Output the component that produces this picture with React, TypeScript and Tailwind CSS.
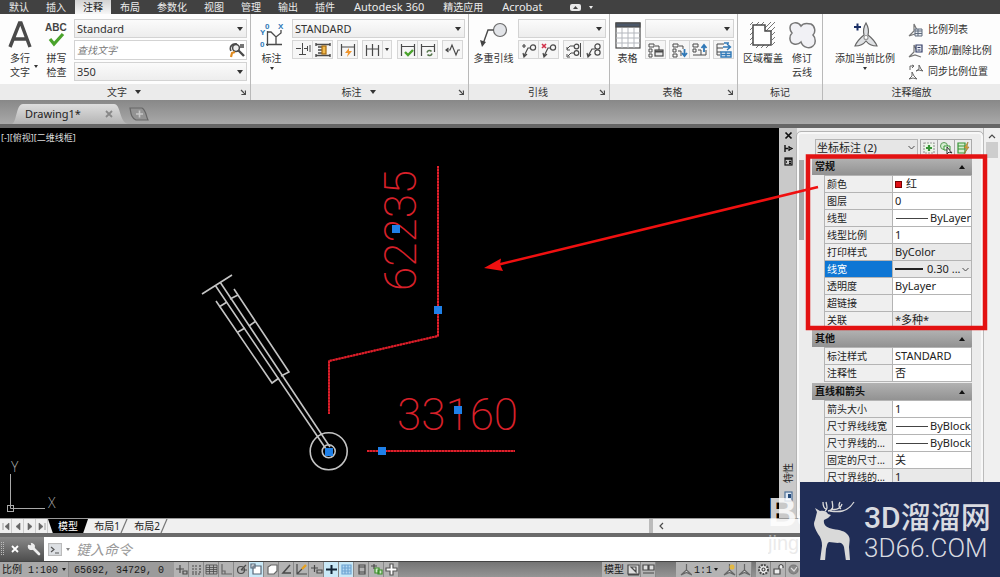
import React from "react";

interface IconProps {
  children: React.ReactNode;
  w?: number;
  h?: number;
  className?: string;
}

const Icon: React.FC<IconProps> = ({ children, w = 16, h = 16, className = "" }) => (
  <svg
    width={w}
    height={h}
    viewBox={`0 0 ${w} ${h}`}
    fill="none"
    stroke="#4a4a4a"
    strokeWidth="1.2"
    className={`shrink-0 ${className}`}
    aria-hidden="true"
  >
    {children}
  </svg>
);

const Caret: React.FC<{ className?: string }> = ({ className = "" }) => (
  <svg width="6" height="4" viewBox="0 0 6 4" className={`shrink-0 ${className}`} aria-hidden="true">
    <path d="M0 0h6L3 4z" fill="currentColor" />
  </svg>
);

const TinyCaret: React.FC<{ className?: string }> = ({ className = "" }) => (
  <svg width="4" height="3" viewBox="0 0 4 3" className={`shrink-0 ${className}`} aria-hidden="true">
    <path d="M0 0h4L2 3z" fill="currentColor" />
  </svg>
);

const menuTabs = ["默认", "插入", "注释", "布局", "参数化", "视图", "管理", "输出", "插件", "Autodesk 360", "精选应用", "Acrobat"];

const MenuBar: React.FC = () => (
  <nav className="flex h-[14px] shrink-0 items-stretch gap-px bg-[#414141] pl-px text-[10px] leading-[14px] text-[#ececec]">
    {menuTabs.map((tab) => (
      <button
        key={tab}
        className={
          tab === "注释"
            ? "bg-gradient-to-b from-[#d2d2d2] to-[#f6f6f6] px-2 text-[#222]"
            : /^A/.test(tab)
              ? "px-[10px] text-[11px]"
              : "px-2"
        }
      >
        {tab}
      </button>
    ))}
    <button className="ml-4 flex items-center gap-2" aria-label="最小化功能区">
      <Icon w={11} h={7}>
        <rect width="11" height="7" rx="2" fill="#e8e8e8" stroke="none" />
        <path d="M3 5h5L5.500 2z" fill="#444" stroke="none" />
      </Icon>
      <TinyCaret />
    </button>
  </nav>
);

interface PanelProps {
  title: string;
  width: string;
  caret?: boolean;
  launcher?: boolean;
  children: React.ReactNode;
}

const Panel: React.FC<PanelProps> = ({ title, width, caret, launcher, children }) => (
  <section className={`flex flex-col border-r border-[#b9b9b9] bg-[#fdfdfd] ${width}`}>
    <div className="flex flex-1 items-start pt-[5px]">{children}</div>
    <div className="flex h-4 items-center bg-[#ebebeb] pr-1">
      <span className="w-2" />
      <button className="flex flex-1 items-center justify-center gap-2 text-[10px] leading-4">
        {title}
        {caret && <Caret />}
      </button>
      {launcher ? (
        <button aria-label={`${title}设置`}>
          <Icon w={6} h={6}>
            <path d="M1 1l4 4M5.400 1.500v4h-4" />
          </Icon>
        </button>
      ) : (
        <span className="w-1" />
      )}
    </div>
  </section>
);

interface BigButtonProps {
  lines: string[];
  arrow?: boolean;
  className?: string;
  children: React.ReactNode;
}

const BigButton: React.FC<BigButtonProps> = ({ lines, arrow, className = "", children }) => (
  <button className={`flex shrink-0 flex-col items-center text-[10px] leading-[14px] ${className}`}>
    <span className="flex h-8 items-center">{children}</span>
    {lines.map((line) => (
      <span key={line}>{line}</span>
    ))}
    {arrow && <TinyCaret className="mt-[2px]" />}
  </button>
);

const Combo: React.FC<{ label: string; value: string }> = ({ label, value }) => (
  <div className="relative h-[19px] w-full">
    <select
      aria-label={label}
      className="block h-full w-full appearance-none border border-[#d3d3d3] bg-gradient-to-b from-[#fbfbfb] to-[#ededed] pl-[2px] text-[11px] leading-[17px] outline-none"
    >
      <option>{value}</option>
    </select>
    <Caret className="pointer-events-none absolute right-1 top-2" />
  </div>
);

const Tool: React.FC<{ label: string; children: React.ReactNode }> = ({ label, children }) => (
  <button aria-label={label} className="-mr-px flex h-[19px] w-[21px] items-center justify-center border border-[#d6d6d6] bg-[#f6f6f6]">
    {children}
  </button>
);

const Ribbon: React.FC = () => (
  <div className="flex h-[86px] shrink-0 text-[#333]">
    <Panel title="文字" width="w-[251px]" caret launcher>
      <BigButton lines={["多行", "文字"]} className="w-10">
        <Icon w={24} h={28}>
          <path d="M2 26L11.500 2h1.500L22 26M6 18h12" strokeWidth="3.400" />
        </Icon>
      </BigButton>
      <TinyCaret className="-ml-[6px] mt-[46px]" />
      <BigButton lines={["拼写", "检查"]} className="ml-px w-[35px]">
        <Icon w={26} h={26}>
          <text x="1" y="9" fontSize="10" fontWeight="700" fontFamily="Liberation Sans" fill="#444" stroke="none">
            ABC
          </text>
          <path d="M6 17l4 5 9-10" stroke="#4aa32c" strokeWidth="3.200" />
        </Icon>
      </BigButton>
      <div className="mr-[3px] flex flex-1 flex-col gap-[2px]">
        <Combo label="文字样式" value="Standard" />
        <div className="flex h-[20px] items-center border border-[#d3d3d3] bg-white">
          <input
            aria-label="查找文字"
            placeholder="查找文字"
            className="w-0 flex-1 bg-transparent pl-[2px] text-[10px] italic outline-none placeholder:text-[#777]"
          />
          <button aria-label="查找" className="mr-px">
            <Icon>
              <path d="M2 9C0 5 3 1 8 2" strokeWidth="1.600" />
              <circle cx="7" cy="6" r="3.400" fill="#eee" strokeWidth="1.500" />
              <path d="M9 8l6 6" strokeWidth="2.400" />
              <path d="M11 3h4M11 5h4" strokeWidth="1.500" />
              <path d="M2 15l1-4 3-1" stroke="#e08a1e" strokeWidth="2.200" />
            </Icon>
          </button>
        </div>
        <Combo label="文字高度" value="350" />
      </div>
    </Panel>

    <Panel title="标注" width="w-[218px]" caret launcher>
      <BigButton lines={["标注"]} arrow className="w-[41px]">
        <Icon w={26} h={28}>
          <text x="6" y="8" fontSize="8" fontWeight="700" fontFamily="Liberation Sans" fill="#2f78b7" stroke="none">0</text>
          <text x="19" y="8" fontSize="8" fontWeight="700" fontFamily="Liberation Sans" fill="#2f78b7" stroke="none">X</text>
          <text x="1" y="14" fontSize="8" fontWeight="700" fontFamily="Liberation Sans" fill="#2f78b7" stroke="none">Y</text>
          <text x="1" y="26" fontSize="8" fontWeight="700" fontFamily="Liberation Sans" fill="#2f78b7" stroke="none">0</text>
          <path d="M8.500 10v15M8 11h4l5 5 5-4V9M17 15v9M7 23.500h16" strokeWidth="1.300" />
        </Icon>
      </BigButton>
      <div className="mr-[3px] flex flex-1 flex-col gap-[2px]">
        <Combo label="标注样式" value="STANDARD" />
        <div className="flex gap-[5px]">
          <div className="flex">
            <Tool label="打断">
              <Icon>
                <path d="M1 6.500h5M9 6.500h3M7.500 1v11M4 12.500h7M12.500 4v5M15 3v7" strokeWidth="1" />
              </Icon>
            </Tool>
            <Tool label="调整间距">
              <Icon>
                <path d="M1 1v3M15 1v3M1 12v3M15 12v3M1 2.500h14M1 13.500h14M3 5h5M3 8h5M3 11h5" strokeWidth="1.400" />
                <rect x="7" y="4" width="4" height="8" fill="#f0b94d" stroke="#a56a10" />
              </Icon>
            </Tool>
          </div>
          <Tool label="快速标注">
            <Icon>
              <path d="M1.500 2v12M14.500 2v12M2 5h12" />
              <path d="M9 6l-4 5h3l-1 4 5-6H9z" fill="#f0962e" stroke="none" />
            </Icon>
          </Tool>
          <div className="flex">
            <Tool label="连续标注">
              <Icon>
                <path d="M1.500 3v11M7.500 2v12M13.500 3v11M2 7h12" />
              </Icon>
            </Tool>
            <button aria-label="更多标注" className="flex w-[10px] items-center justify-center border border-[#d6d6d6] bg-[#f6f6f6]">
              <TinyCaret />
            </button>
          </div>
          <div className="flex">
            <Tool label="检验">
              <Icon>
                <path d="M1.500 2v12M14.500 2v12M2 4.500h12" />
                <path d="M5 10l3 3 5-5" stroke="#4aa32c" strokeWidth="2.400" />
              </Icon>
            </Tool>
            <Tool label="更新">
              <Icon>
                <path d="M1.500 2v12M14.500 2v8M2 4.500h12" />
                <path d="M7 10.500a2.500 2.500 0 0 1 4.500-1M12 11.500a2.500 2.500 0 0 1-4.500 1" stroke="#56764c" strokeWidth="1.500" />
              </Icon>
            </Tool>
          </div>
          <Tool label="折弯线性">
            <Icon>
              <path d="M1 8h4l2-5 4 10 2-5h2M3.500 6L1 8l2.500 2" />
            </Icon>
          </Tool>
        </div>
      </div>
    </Panel>

    <Panel title="引线" width="w-[141px]" launcher>
      <BigButton lines={["多重引线"]} className="w-[49px]">
        <Icon w={28} h={28}>
          <circle cx="20" cy="9" r="6.500" fill="#e2e4e8" stroke="#6b6b6b" />
          <path d="M13.500 9H8L3 23" strokeWidth="1.400" />
          <path d="M0 19l2 7 4-5z" fill="#444" stroke="none" />
        </Icon>
      </BigButton>
      <div className="mr-[3px] flex flex-1 flex-col gap-[2px]">
        <Combo label="引线样式" value="" />
        <div className="flex gap-[5px]">
          <div className="flex">
            <Tool label="添加引线">
              <Icon>
                <circle cx="12" cy="5.500" r="2.600" />
                <path d="M9.500 6H7l-4 8M2 11l1 4 3-3M1 4h4M3 2v4" />
              </Icon>
            </Tool>
            <Tool label="删除引线">
              <Icon>
                <circle cx="12" cy="5.500" r="2.600" />
                <path d="M9.500 6H7l-4 8M2 11l1 4 3-3" />
                <path d="M1 2l4 4M5 2L1 6" stroke="#d2324a" strokeWidth="1.600" />
              </Icon>
            </Tool>
          </div>
          <div className="flex">
            <Tool label="对齐">
              <Icon>
                <circle cx="10.500" cy="4.500" r="2.300" />
                <circle cx="10.500" cy="11" r="2.300" />
                <path d="M14.500 1v14M8 4H4L1 7M8 11H5l-3 3M1 5v3h3M1 12v3h3" strokeWidth="1" />
              </Icon>
            </Tool>
            <Tool label="合并">
              <Icon>
                <circle cx="11.500" cy="4.500" r="2.600" />
                <circle cx="11.500" cy="10.500" r="2.600" />
                <path d="M9 7H6l-4 7M1 11l1 4 3-3" />
              </Icon>
            </Tool>
          </div>
        </div>
      </div>
    </Panel>

    <Panel title="表格" width="w-[128px]" launcher>
      <BigButton lines={["表格"]} className="w-[35px]">
        <Icon w={26} h={27}>
          <rect x="1" y="1" width="24" height="25" fill="#fff" />
          <rect x="1" y="1" width="24" height="4" fill="#4b5768" />
          <path d="M7 6v20M13 6v20M19 6v20M1 11h24M1 16h24M1 21h24" stroke="#b4b7bd" strokeWidth="1" />
        </Icon>
      </BigButton>
      <div className="mr-[3px] flex flex-1 flex-col gap-[2px]">
        <Combo label="表格样式" value="" />
        <div className="flex gap-[4px]">
          <Tool label="数据链接">
            <Icon>
              <path d="M1 2h5v3H1zM1 7h3v3H1zM1 12h3v3H1zM7 4h4v4" strokeWidth="1" />
              <rect x="7" y="8" width="8" height="6" fill="#e6e6e6" />
              <path d="M7 9.500h8" strokeWidth="2" />
            </Icon>
          </Tool>
          <div className="flex">
            <Tool label="从源下载">
              <Icon>
                <path d="M1 2h5v3H1zM1 7h3v3H1zM1 12h4v3H1zM7 4h4v3M6 9h3v5" strokeWidth="1" />
                <path d="M12.500 7v6M10 11l2.500 3L15 11" stroke="#2f78b7" strokeWidth="1.800" />
              </Icon>
            </Tool>
            <Tool label="上载到源">
              <Icon>
                <path d="M1 2h5v3H1zM1 7h3v3H1zM1 13h13V8M6 8h3v5" strokeWidth="1" />
                <path d="M12 10V3M9.500 6L12 3l2.500 3" stroke="#2f78b7" strokeWidth="1.800" />
              </Icon>
            </Tool>
          </div>
          <Tool label="提取数据">
            <Icon>
              <path d="M1 2h7M1 2v11h3M1 6h6M1 10h4" strokeWidth="1" />
              <path d="M7 5h7M11 2l3.500 3L11 8M5 10h10v5H5zM10 10v5M5 12.500h10M8 1h5" stroke="#2f78b7" strokeWidth="1.400" />
            </Icon>
          </Tool>
        </div>
      </div>
    </Panel>

    <Panel title="标记" width="w-[85px]">
      <BigButton lines={["区域覆盖"]} className="ml-[3px] w-[44px]">
        <Icon w={28} h={28}>
          <path
            d="M1 4l3-3M1 9l3-3M1 14l3-3M1 19l3-3M1 24l3-3M7 4l3-3M12 4l3-3M16 7l6-6M17 10l9-9M22 10l4-4M23 14l3-3M23 19l3-3M23 24l3-3M7 27l3-3M12 27l3-3M17 27l3-3"
            stroke="#777"
            strokeWidth="1"
          />
          <path d="M4 4h12v6h6v14H4z" fill="#fff" strokeWidth="1.500" />
        </Icon>
      </BigButton>
      <BigButton lines={["修订", "云线"]} className="w-[34px]">
        <Icon w={28} h={28}>
          <path
            d="M13 5C10 0 2 1 2 7c0 3 1 4 2 5-3 3-3 10 2 11 4 1 6-1 7-2 2 6 9 7 12 4 3-2 3-8 0-11 3-3 2-9-2-11-4-1-8-1-10 2z"
            fill="#f1f1f5"
            stroke="#777"
            strokeWidth="1.500"
          />
        </Icon>
      </BigButton>
    </Panel>

    <Panel title="注释缩放" width="min-w-[177px] flex-1 border-r-0">
      <BigButton lines={["添加当前比例"]} arrow className="w-[84px]">
        <Icon w={26} h={28}>
          <path d="M2 6h7M5.500 2.500v7" stroke="#1b2f66" strokeWidth="2" />
          <path d="M14 2c-3 5-3 8-2 12-5 4-7 6-9 11 5 0 8-1 11-5 3 4 6 5 11 5-2-5-4-7-9-11 1-4 1-7-2-12z" fill="#dfe1e4" stroke="#666" />
          <circle cx="14" cy="16.500" r="2" fill="#fff" stroke="#999" />
        </Icon>
      </BigButton>
      <div className="ml-px flex flex-col text-[10px] leading-[21px]">
        <button className="flex items-center gap-1 whitespace-nowrap">
          <Icon>
            <path d="M1 14l5-5V2l3 6M1 14l6-2" stroke="#777" />
            <path d="M7 7h7v7H7zM7 9h7M7 11.500h7M10 7v7" stroke="#5f6b7c" fill="#e9edf2" strokeWidth="1" />
          </Icon>
          比例列表
        </button>
        <button className="flex items-center gap-1 whitespace-nowrap">
          <Icon>
            <path d="M1 14l5-5V2l3 6M1 14l6-2 6 2" stroke="#777" />
            <path d="M8 2h6v7H8z" stroke="#333c66" fill="#e9edf2" />
            <path d="M9.500 4.500h3M9.500 7h3" stroke="#333c66" strokeWidth="1" />
          </Icon>
          添加/删除比例
        </button>
        <button className="flex items-center gap-1 whitespace-nowrap">
          <Icon>
            <path d="M2 6V2h4M4 1l2 1-2 2M1 15l3-3V8l2 4 3 3-4-1zM8 7l3-2V1l2 4 2 2-4-1z" stroke="#666" strokeWidth="1" />
          </Icon>
          同步比例位置
        </button>
      </div>
    </Panel>
  </div>
);

const FileTabs: React.FC = () => (
  <div className="flex h-7 shrink-0 items-end border-b-4 border-[#666] bg-gradient-to-b from-[#888] to-[#a9a9a9] pl-3">
    <button className="relative flex h-5 w-[116px] items-center pl-[13px] text-[11px] text-[#222]">
      <svg width="116" height="20" viewBox="0 0 116 20" className="absolute inset-0" aria-hidden="true">
        <defs>
          <linearGradient id="fileTab" x1="0" y1="0" x2="0" y2="1">
            <stop offset="0" stopColor="#dedede" />
            <stop offset="1" stopColor="#b4b4b4" />
          </linearGradient>
        </defs>
        <path d="M0 20C5 18 4 0 11 0h91c7 0 5 18 14 20z" fill="url(#fileTab)" />
      </svg>
      <span className="relative">Drawing1*</span>
      <Icon w={8} h={8} className="relative ml-auto mr-[15px]">
        <path d="M1 1l6 6M7 1L1 7" stroke="#888" strokeWidth="1.800" />
      </Icon>
    </button>
    <button aria-label="新图形" className="mb-[3px] ml-px">
      <Icon w={20} h={14}>
        <path d="M1 1h12c4 2 4 8 6 12H7C2 11 2 6 1 1z" fill="#939393" stroke="#666" />
        <path d="M7 7h7M10.500 3.500v7" stroke="#c8c8c8" strokeWidth="1.600" />
      </Icon>
    </button>
  </div>
);

const grips = [
  [396, 229],
  [438, 310],
  [458, 410],
  [382, 451],
];

const Drawing: React.FC = () => (
  <div className="relative min-w-0 flex-1 overflow-hidden bg-black">
    <div className="absolute left-px top-1 text-[9px] leading-[11px] text-[#ddd]">[-][俯视][二维线框]</div>
    <svg width="780" height="391" viewBox="0 128 780 391" fill="none" className="block" aria-label="图形">
      <g stroke="#c4c4c4" strokeWidth="1.600">
        <path d="M202 294l30-19M215 285l111 164M220 282l110 165" />
        <path d="M216 301l56 82 7-5M219 307l8-5M238 332l7-4" />
        <path d="M234 289l55 83-8 4M230 299l8-4M249 326l7-5" />
        <circle cx="328.700" cy="451.300" r="18.500" />
        <circle cx="328.700" cy="451.300" r="6.500" />
      </g>
      <rect x="325" y="448" width="8" height="8" fill="#1f80e8" />
      <g stroke="#9c1219" strokeWidth="2">
        <path d="M438 166v170l-109 25v53M367 451h148" />
        <path d="M438 166v170l-109 25v53M367 451h148" stroke="#e0202c" strokeDasharray="2 1" />
      </g>
      <g fill="#d8202a" fontFamily="Roboto" fontWeight="200" fontSize="44">
        <text x="397" y="430">33160</text>
        <text transform="translate(416 291) rotate(-90)">62235</text>
      </g>
      {grips.map(([x, y]) => (
        <rect key={`${x}-${y}`} x={x - 4} y={y - 4} width="8" height="8" fill="#1f80e8" />
      ))}
      <g stroke="#a9a9a9" strokeWidth="1">
        <path d="M10.500 474v34.500H45" />
        <rect x="7.500" y="505.500" width="6" height="6" />
      </g>
      <g fill="#a9a9a9" fontFamily="Open Sans" fontWeight="300" fontSize="14">
        <text x="11" y="472">Y</text>
        <text x="48" y="508">X</text>
      </g>
    </svg>
  </div>
);

type Kind = "text" | "red" | "line" | "select" | "gray";

interface Property {
  name: string;
  value: string;
  kind?: Kind;
}

const groups: { title: string; rows: Property[] }[] = [
  {
    title: "常规",
    rows: [
      { name: "颜色", value: "红", kind: "red" },
      { name: "图层", value: "0" },
      { name: "线型", value: "ByLayer", kind: "line" },
      { name: "线型比例", value: "1" },
      { name: "打印样式", value: "ByColor", kind: "gray" },
      { name: "线宽", value: "0.30 ...", kind: "select" },
      { name: "透明度", value: "ByLayer" },
      { name: "超链接", value: "" },
      { name: "关联", value: "*多种*", kind: "gray" },
    ],
  },
  {
    title: "其他",
    rows: [
      { name: "标注样式", value: "STANDARD" },
      { name: "注释性", value: "否" },
    ],
  },
  {
    title: "直线和箭头",
    rows: [
      { name: "箭头大小", value: "1" },
      { name: "尺寸界线线宽", value: "ByBlock", kind: "line" },
      { name: "尺寸界线的...", value: "ByBlock", kind: "line" },
      { name: "固定的尺寸...", value: "关" },
      { name: "尺寸界线的...", value: "1", kind: "gray" },
    ],
  },
];

const PropertyValue: React.FC<{ row: Property }> = ({ row }) => {
  if (row.kind === "red") {
    return (
      <span className="flex items-center gap-1 pl-[2px]">
        <span className="h-[7px] w-[7px] border border-[#700] bg-[#e00f16]" />
        {row.value}
      </span>
    );
  }
  if (row.kind === "line") {
    return (
      <span className="flex items-center gap-[2px] pl-[3px]">
        <span className="h-px w-8 shrink-0 bg-[#444]" />
        {row.value}
      </span>
    );
  }
  if (row.kind === "select") {
    return (
      <span className="relative flex items-center gap-1 pl-[2px]">
        <span className="h-[2px] w-7 shrink-0 bg-[#222]" />
        <select aria-label={row.name} className="block h-4 w-0 flex-1 appearance-none bg-transparent leading-4 outline-none">
          <option>{row.value}</option>
        </select>
        <Icon w={7} h={5} className="pointer-events-none absolute right-[2px]">
          <path d="M.5 1l3 3 3-3" strokeWidth="1" />
        </Icon>
      </span>
    );
  }
  return <span className="pl-[2px]">{row.value}</span>;
};

const PropertyGroup: React.FC<{ title: string; rows: Property[] }> = ({ title, rows }) => (
  <div>
    <button className="flex h-[17px] w-full items-center justify-between bg-gradient-to-b from-[#b2b2b2] to-[#929292] pl-[3px] pr-[7px] text-[10px] font-bold leading-[17px] text-[#111]">
      {title}
      <svg width="6" height="4" viewBox="0 0 6 4" aria-hidden="true">
        <path d="M0 4h6L3 0z" fill="#111" />
      </svg>
    </button>
    <div className="pl-3">
      <table className="w-full table-fixed border-collapse text-[#222]">
        <tbody>
          {rows.map((row, index) => (
            <tr key={index} className="h-[17px]">
              <th
                scope="row"
                className={`w-[68px] overflow-hidden whitespace-nowrap border border-[#b4b4b4] p-0 pl-[2px] text-left text-[10px] font-normal leading-4 ${
                  row.kind === "select" ? "bg-[#0e76d4] text-white" : "bg-[#efefef]"
                }`}
              >
                {row.name}
              </th>
              <td
                className={`overflow-hidden whitespace-nowrap border border-[#b4b4b4] p-0 text-[11px] leading-4 ${
                  row.kind === "gray" || row.kind === "select" ? "bg-[#e9e9e9]" : "bg-white"
                }`}
              >
                <PropertyValue row={row} />
              </td>
            </tr>
          ))}
        </tbody>
      </table>
    </div>
  </div>
);

const Palette: React.FC = () => (
  <aside className="flex w-[221px] shrink-0 bg-[#ececec]">
    <div className="flex w-[18px] shrink-0 flex-col items-center gap-1 bg-[#c9c9c9] pb-4 pt-[3px]">
      <button aria-label="关闭">
        <Icon w={9} h={9}>
          <path d="M1.500 1.500l6 6M7.500 1.500l-6 6" stroke="#111" strokeWidth="1.700" />
        </Icon>
      </button>
      <button aria-label="自动隐藏">
        <Icon w={9} h={9}>
          <path d="M1 1v7M1 4.500h3" stroke="#111" strokeWidth="1.400" />
          <path d="M5 2v5M5 3l3 1.500L5 6" stroke="#111" />
        </Icon>
      </button>
      <button aria-label="特性菜单">
        <Icon w={9} h={9}>
          <rect x="1" y="1" width="7" height="7" stroke="#111" />
          <path d="M1 2h7M2 5h1M5 4.500h2M5 6.500h2" stroke="#111" strokeWidth="1.500" />
        </Icon>
      </button>
      <span className="mt-auto text-[10px] leading-3 text-[#222] [writing-mode:sideways-lr]">特性</span>
      <Icon w={9} h={11} className="mt-1">
        <rect x="1" y="1" width="7" height="9" stroke="#4d6f96" fill="#dfe9f5" />
        <rect x="4" y="3" width="3" height="4" fill="#234a7a" stroke="none" />
      </Icon>
    </div>
    <div className="mt-1 flex min-w-0 flex-1 overflow-hidden rounded-t border-2 border-b-0 border-[#f8f8f8] outline outline-[#b4b4b4]">
      <div className="w-[5px] shrink-0 pt-[26px]">
        <div className="h-20 bg-[#a9a9a9]" />
      </div>
      <div className="ml-2 mr-[9px] mt-[5px] flex min-w-0 flex-1 flex-col gap-px">
        <div className="mb-px flex h-[17px] shrink-0 items-stretch pl-[3px]">
          <div className="relative flex-1">
            <select
              aria-label="选定对象"
              className="block h-full w-full appearance-none border border-[#b5b5b5] bg-[#e6e6e6] pl-px text-[11px] leading-[15px] text-[#222] outline-none"
            >
              <option>坐标标注 (2)</option>
            </select>
            <Icon w={7} h={5} className="pointer-events-none absolute right-[3px] top-[6px]">
              <path d="M.5 1l3 3 3-3" strokeWidth="1" />
            </Icon>
          </div>
          <button aria-label="切换 PICKADD" className="ml-[2px] border border-[#aaa] px-px">
            <Icon w={14} h={14}>
              <path d="M2 2h10v10H2z" stroke="#999" strokeDasharray="2 1" fill="#eaf5e6" />
              <path d="M4 7h6M7 4v6" stroke="#379437" strokeWidth="2.200" />
            </Icon>
          </button>
          <button aria-label="选择对象" className="border border-l-0 border-[#aaa] px-px">
            <Icon w={14} h={14}>
              <circle cx="5" cy="5" r="3.500" stroke="#5a9a58" fill="#d6efd1" strokeWidth="1" />
              <path d="M5 5h6v4H5z" stroke="#379437" strokeWidth="1" fill="#eef8ec" />
              <path d="M8 6v7l2-2 3 1z" fill="#fff" stroke="#333" strokeWidth="1" />
            </Icon>
          </button>
          <button aria-label="快速选择" className="border border-l-0 border-[#aaa] px-px">
            <Icon w={14} h={14}>
              <path d="M2 2h7v10H2zM2 5h7M2 8h7" stroke="#379437" fill="#d6efd1" />
              <path d="M12 1L8 7h3l-3 6 5-7h-2z" fill="#e6a935" stroke="#8d7434" strokeWidth=".6" />
            </Icon>
          </button>
        </div>
        {groups.map((group) => (
          <PropertyGroup key={group.title} title={group.title} rows={group.rows} />
        ))}
      </div>
    </div>
    <div className="flex w-[17px] shrink-0 flex-col items-center border-l border-[#bbb] bg-[#f0f0f0] pt-[5px]">
      <Icon w={8} h={6}>
        <path d="M1 5l3-3 3 3" />
      </Icon>
      <div className="mt-[3px] h-4 w-3 bg-[#cdcdcd]" />
    </div>
  </aside>
);

const LayoutTabs: React.FC = () => (
  <div className="flex h-[15px] shrink-0 items-stretch border-t border-[#999] bg-[#f0f0f0] text-[10px] leading-[14px] text-[#222]">
    {["M3 2v7M9 2L5 5.500 9 9z", "M8 2L4 5.500 8 9z", "M4 2l4 3.500L4 9z", "M9 2v7M3 2l4 3.500L3 9z"].map((d) => (
      <button key={d} aria-label="布局导航" className="flex w-3 items-center justify-center border-r border-[#ccc]">
        <Icon w={11} h={11}>
          <path d={d} fill="#666" stroke="#666" strokeWidth=".6" />
        </Icon>
      </button>
    ))}
    <button className="w-10 bg-black text-white [clip-path:polygon(0_0,100%_0,88%_100%,12%_100%)]">模型</button>
    {["布局1", "布局2"].map((name) => (
      <button key={name} className="flex w-10 items-center justify-end">
        {name}
        <Icon w={8} h={14}>
          <path d="M7 0L1 14" stroke="#777" />
        </Icon>
      </button>
    ))}
    <div className="ml-auto flex w-[351px] items-center border-l-4 border-[#bbb] pl-[5px]">
      <button aria-label="向左滚动">
        <Icon w={7} h={8}>
          <path d="M5 1L2 4l3 3" />
        </Icon>
      </button>
    </div>
  </div>
);

const CommandLine: React.FC = () => (
  <div className="flex h-7 shrink-0 items-stretch border-t-4 border-[#6a6a6a] bg-white">
    <div className="flex w-11 items-center gap-2 bg-gradient-to-b from-[#8a8a8a] to-[#4e4e4e]">
      <Icon w={4} h={16}>
        <path d="M1.500 1v14M3.500 1v14" stroke="#bbb" strokeDasharray="1 1" strokeWidth="1" />
      </Icon>
      <button aria-label="关闭命令行" className="-ml-px">
        <Icon w={8} h={8}>
          <path d="M1 1l6 6M7 1L1 7" stroke="#fff" strokeWidth="1.800" />
        </Icon>
      </button>
      <button aria-label="自定义">
        <Icon w={14} h={14}>
          <path d="M6 6l6 6" stroke="#eee" strokeWidth="2.600" strokeLinecap="round" />
          <path d="M1.500 3.500a3 3 0 1 0 3-2L5 4z" fill="#eee" stroke="#eee" />
        </Icon>
      </button>
    </div>
    <button aria-label="最近使用的命令" className="ml-1 flex items-center gap-1 text-[#888]">
      <Icon w={14} h={13}>
        <rect x=".5" y=".5" width="13" height="12" fill="#dde0e4" stroke="#bbb" />
        <path d="M3 4l3 2.500L3 9M7 10h4" stroke="#555" />
      </Icon>
      <TinyCaret />
    </button>
    <input
      aria-label="命令"
      placeholder="键入命令"
      className="ml-[6px] w-0 flex-1 text-[14px] italic outline-none placeholder:text-[#999]"
    />
    {/* keeps the prompt clear of the logo */}
    <span className="w-[240px]" />
  </div>
);

const statusIcons: { label: string; on?: boolean; art: React.ReactNode }[] = [
  { label: "推断约束", art: <path d="M1 6h8M5 2v8M8 8h4v3H8z" /> },
  { label: "捕捉模式", art: <path d="M2 3h5M2 6h5M2 9h5M10 2v8M2 11h9" strokeDasharray="2 1" /> },
  { label: "栅格显示", art: <path d="M1 2h11v9H1zM1 4.500h11M1 6.500h11M1 8.500h11M4.500 2v9M8.500 2v9" strokeWidth=".8" /> },
  { label: "正交模式", art: <path d="M2 1v10h10M5 11V8H2" stroke="#666" /> },
  { label: "极轴追踪", art: <><circle cx="6" cy="7" r="3.500" /><path d="M6 7h6M6 7l5-5" /></> },
  { label: "对象捕捉", on: true, art: <path d="M3 3h8v8H3zM1 1h4v4H1z" fill="#fff" stroke="#567" /> },
  { label: "三维对象捕捉", art: <path d="M3 4l3-2h6v6l-3 3H3z" fill="#fff" stroke="#666" /> },
  { label: "对象捕捉追踪", art: <path d="M10 2L3 10h8" strokeWidth="1.500" /> },
  { label: "动态 UCS", art: <><path d="M2 1v10h10M2 11l5-5" /><path d="M7 6l4-4" stroke="#e6a01e" strokeWidth="2.400" /></> },
  { label: "动态输入", art: <path d="M1 5h7M4.500 2v7M7 7h5v3H7z" /> },
  { label: "线宽", on: true, art: <path d="M1 6.500h11M6.500 2v9" stroke="#123" strokeWidth="2" /> },
  { label: "透明度", on: true, art: <path d="M2 2h9v9H2zM2 5h9M2 8h9M5 2v9M8 2v9" stroke="#6da4d2" fill="#b5d9f2" /> },
  { label: "快捷特性", art: <path d="M4 2h6v9H4zM4 4h6M4 9h6" /> },
  { label: "选择循环", art: <><path d="M1 3h6M4 1v5" /><path d="M5 5h4v5H5zM8 7h4v4H8z" stroke="#3c8f2b" fill="#cfeac8" /></> },
  { label: "注释监视器", art: <path d="M5 1h3v4h4v3H8v4H5V8H1V5h4z" fill="#fff" stroke="#555" /> },
];

const StatusButton: React.FC<{ label: string; on?: boolean; children: React.ReactNode }> = ({ label, on, children }) => (
  <button
    aria-label={label}
    className={`flex w-[15px] shrink-0 items-center justify-center border-r border-[#888] ${on ? "bg-[#c9e8f6]" : "bg-[#b3b3b3]"}`}
  >
    <Icon w={13} h={13}>{children}</Icon>
  </button>
);

const scaleArt = <path d="M6.500 1v6L1 12l5.500-2.500L12 12 6.500 7" fill="#eee" stroke="#666" />;

const StatusBar: React.FC = () => (
  <footer className="flex h-4 shrink-0 items-stretch border-t border-[#444] bg-gradient-to-b from-[#757575] to-[#959595] font-['Liberation_Mono','Noto_Sans_CJK_SC',monospace] text-[10px] leading-[18px] text-[#1a1a1a]">
    <button className="flex w-[69px] gap-1 whitespace-nowrap border-r border-[#888] bg-[#a9a9a9] pl-[2px]">
      比例 1:100 <TinyCaret className="mt-[6px]" />
    </button>
    <div className="w-[105px] whitespace-pre bg-[#9b9b9b] pl-[5px]">65692, 34729, 0</div>
    <div className="flex">
      {statusIcons.map((item) => (
        <StatusButton key={item.label} label={item.label} on={item.on}>
          {item.art}
        </StatusButton>
      ))}
    </div>
    <div className="ml-auto flex w-[398px] items-stretch">
      <button className="flex w-6 justify-center bg-[#b3b3b3]">模型</button>
      <StatusButton label="快速查看布局">
        <path d="M1 2h11v9H1zM4 4h5v5zM1 12h11" fill="#ddd" />
      </StatusButton>
      <StatusButton label="快速查看图形">
        <path d="M1 2h5v5H1zM7 2h5v5H7zM1 10h11" fill="#ddd" />
      </StatusButton>
      <span className="ml-1 w-4" />
      <button className="flex gap-[2px] bg-[#b3b3b3] px-1">
        <Icon w={12} h={13} className="mt-px">{scaleArt}</Icon>
        1:1
        <TinyCaret className="mt-[6px]" />
      </button>
      <StatusButton label="注释可见性">
        {scaleArt}
        <circle cx="9" cy="4" r="1.500" stroke="#e6b93c" strokeWidth="2" />
      </StatusButton>
      <StatusButton label="自动缩放">{scaleArt}</StatusButton>
      <span className="w-1" />
      <StatusButton label="切换工作空间">
        <circle cx="6.500" cy="6.500" r="4.500" fill="#eee" strokeDasharray="2 1" strokeWidth="2" />
        <circle cx="6.500" cy="6.500" r="1.500" />
      </StatusButton>
      <StatusButton label="锁定">
        <path d="M2 6h6v5H2zM7 6V3q2-3 4 0v2" fill="#eee" />
      </StatusButton>
      <StatusButton label="硬件加速">
        <circle cx="6.500" cy="6.500" r="4.500" fill="#888" stroke="#777" />
        <path d="M4 5l3 3 3-4" stroke="#ddd" />
      </StatusButton>
    </div>
  </footer>
);

const Callout: React.FC = () => (
  <svg width="520" height="200" viewBox="480 140 520 200" fill="none" className="pointer-events-none absolute right-0 top-[140px]" aria-hidden="true">
    <rect x="808" y="156.500" width="177" height="171.500" stroke="#e31212" strokeWidth="4.500" />
    <path d="M818 187L499 264.500" stroke="#f01010" strokeWidth="2.500" />
    <path d="M484 268l17-9.500-1 6 3 6.500z" fill="#f01010" />
  </svg>
);

const Brand: React.FC = () => (
  <div className="absolute bottom-0 right-0 flex items-end">
    <div className="flex w-8 flex-col overflow-hidden whitespace-nowrap pb-5 font-['Liberation_Sans',sans-serif]">
      <span className="text-[40px] font-bold leading-[34px] text-white/80">Ba</span>
      <span className="text-[20px] leading-7 text-[#ddd]/60">jing</span>
    </div>
    <div className="flex h-[95px] w-[200px] items-center gap-2 bg-[#202d56] pl-3 text-[#d9dbe0]">
      <svg width="44" height="60" viewBox="0 0 44 60" fill="none" className="shrink-0" aria-hidden="true">
        <path
          d="M3 8l5 3c3-1 7 0 8 3l3 1-3 3-4 2c-1 5 3 8 9 9 7 1 12 2 15 6 3 4 1 8 1 12l1 13-4 1-2-14c-1-3-3-5-6-4l-9-1c-2 1-2 4-3 7l-1 12H8l2-15c0-5-1-8-4-12C2 27 1 24 3 20l2-8z"
          fill="#d9d9d9"
        />
        <path
          d="M13 11c3-2 2-5 1-9M14 9C11 8 11 5 11 2M16 11c6-1 5-5 4-10M19 9c3 1 9 1 11-5M18 11c8 1 17 2 24-9M29 9c-3-2-2-5-1-7"
          stroke="#d9d9d9"
          strokeWidth="1.300"
        />
      </svg>
      <div className="flex flex-col whitespace-nowrap">
        <span className="font-['Roboto','Noto_Sans_CJK_SC',sans-serif] text-[30px] font-medium leading-9">3D溜溜网</span>
        <span className="font-['Roboto',sans-serif] text-[26px] font-light leading-6">3D66.COM</span>
      </div>
    </div>
  </div>
);

const App: React.FC = () => (
  <div className="relative flex h-screen flex-col overflow-hidden bg-[#6a6a6a] font-['Noto_Sans','Noto_Sans_CJK_SC',sans-serif]">
    <MenuBar />
    <Ribbon />
    <FileTabs />
    <main className="flex min-h-0 flex-1 overflow-hidden">
      <Drawing />
      <Palette />
    </main>
    <LayoutTabs />
    <CommandLine />
    <StatusBar />
    <Callout />
    <Brand />
  </div>
);

export default App;
